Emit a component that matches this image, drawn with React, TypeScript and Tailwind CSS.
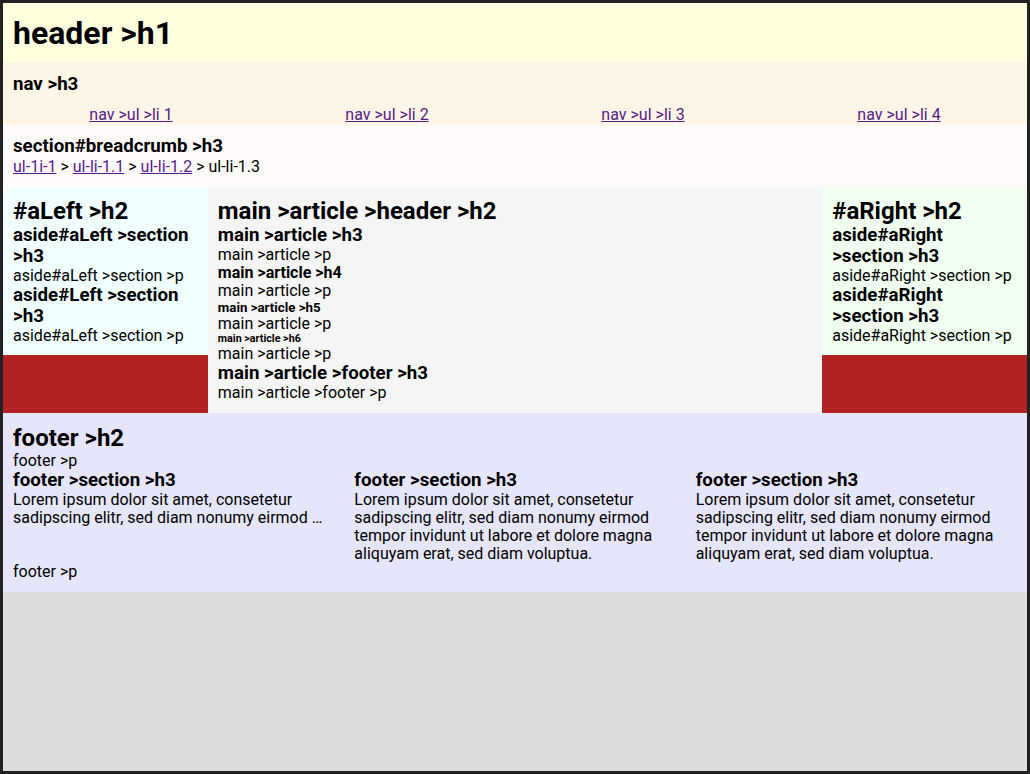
import React from "react";

const lorem =
  "Lorem ipsum dolor sit amet, consetetur sadipscing elitr, sed diam nonumy eirmod tempor invidunt ut labore et dolore magna aliquyam erat, sed diam voluptua.";

export default function App() {
  const link = "text-[#551a8b] underline";
  return (
    <div
      className="h-screen w-full border-[3px] border-[#222222] bg-[#dcdcdc] text-black leading-[1.13] text-[16px] flex flex-col"
      style={{ fontFamily: "Roboto, 'Liberation Sans', sans-serif" }}
    >
      <header className="bg-[#ffffe0] pt-[12px] pb-[11px] px-[10px]">
        <h1 className="text-[32px] font-bold">header &gt;h1</h1>
      </header>
      <nav className="bg-[#fdf5e6] pt-[12px]">
        <h3 className="text-[18.72px] font-bold px-[10px]">nav &gt;h3</h3>
        <ul className="grid grid-cols-4 mt-[11px]">
          {[1, 2, 3, 4].map((i) => (
            <li key={i} className="text-center">
              <a className={link}>nav &gt;ul &gt;li {i}</a>
            </li>
          ))}
        </ul>
      </nav>
      <section className="bg-[#fffafa] pt-[12px] pb-[11px] px-[10px]">
        <h3 className="text-[18.72px] font-bold">section#breadcrumb &gt;h3</h3>
        <p>
          <a className={link}>ul-1i-1</a> &gt; <a className={link}>ul-li-1.1</a> &gt;{" "}
          <a className={link}>ul-li-1.2</a> &gt; ul-li-1.3
        </p>
      </section>
      <div className="grid grid-cols-[1fr_3fr_1fr]">
        <aside className="bg-[#b22222] flex flex-col">
          <div className="bg-[#f0ffff] pt-[11px] pb-[10px] px-[10px]">
            <h2 className="text-[24px] font-bold">#aLeft &gt;h2</h2>
            <section>
              <h3 className="text-[18.72px] font-bold">aside#aLeft &gt;section &gt;h3</h3>
              <p>aside#aLeft &gt;section &gt;p</p>
            </section>
            <section>
              <h3 className="text-[18.72px] font-bold">aside#Left &gt;section &gt;h3</h3>
              <p>aside#aLeft &gt;section &gt;p</p>
            </section>
          </div>
        </aside>
        <main className="bg-[#f5f5f5] pt-[11px] pb-[10px] px-[10px]">
          <article>
            <header>
              <h2 className="text-[24px] font-bold">main &gt;article &gt;header &gt;h2</h2>
            </header>
            <h3 className="text-[18.72px] font-bold">main &gt;article &gt;h3</h3>
            <p>main &gt;article &gt;p</p>
            <h4 className="text-[16px] font-bold">main &gt;article &gt;h4</h4>
            <p>main &gt;article &gt;p</p>
            <h5 className="text-[13.28px] font-bold">main &gt;article &gt;h5</h5>
            <p>main &gt;article &gt;p</p>
            <h6 className="text-[10.72px] font-bold">main &gt;article &gt;h6</h6>
            <p>main &gt;article &gt;p</p>
            <footer>
              <h3 className="text-[18.72px] font-bold">main &gt;article &gt;footer &gt;h3</h3>
              <p>main &gt;article &gt;footer &gt;p</p>
            </footer>
          </article>
        </main>
        <aside className="bg-[#b22222] flex flex-col">
          <div className="bg-[#f0fff0] pt-[11px] pb-[10px] px-[10px]">
            <h2 className="text-[24px] font-bold">#aRight &gt;h2</h2>
            <section>
              <h3 className="text-[18.72px] font-bold">aside#aRight &gt;section &gt;h3</h3>
              <p>aside#aRight &gt;section &gt;p</p>
            </section>
            <section>
              <h3 className="text-[18.72px] font-bold">aside#aRight &gt;section &gt;h3</h3>
              <p>aside#aRight &gt;section &gt;p</p>
            </section>
          </div>
        </aside>
      </div>
      <footer className="bg-[#e6e6fa] pt-[12px] pb-[11px]">
        <h2 className="text-[24px] font-bold px-[10px]">footer &gt;h2</h2>
        <p className="px-[10px]">footer &gt;p</p>
        <div className="grid grid-cols-3">
          <section className="px-[10px]">
            <h3 className="text-[18.72px] font-bold">footer &gt;section &gt;h3</h3>
            <p>Lorem ipsum dolor sit amet, consetetur sadipscing elitr, sed diam nonumy eirmod …</p>
          </section>
          <section className="px-[10px]">
            <h3 className="text-[18.72px] font-bold">footer &gt;section &gt;h3</h3>
            <p>{lorem}</p>
          </section>
          <section className="px-[10px]">
            <h3 className="text-[18.72px] font-bold">footer &gt;section &gt;h3</h3>
            <p>{lorem}</p>
          </section>
        </div>
        <p className="px-[10px]">footer &gt;p</p>
      </footer>
    </div>
  );
}
